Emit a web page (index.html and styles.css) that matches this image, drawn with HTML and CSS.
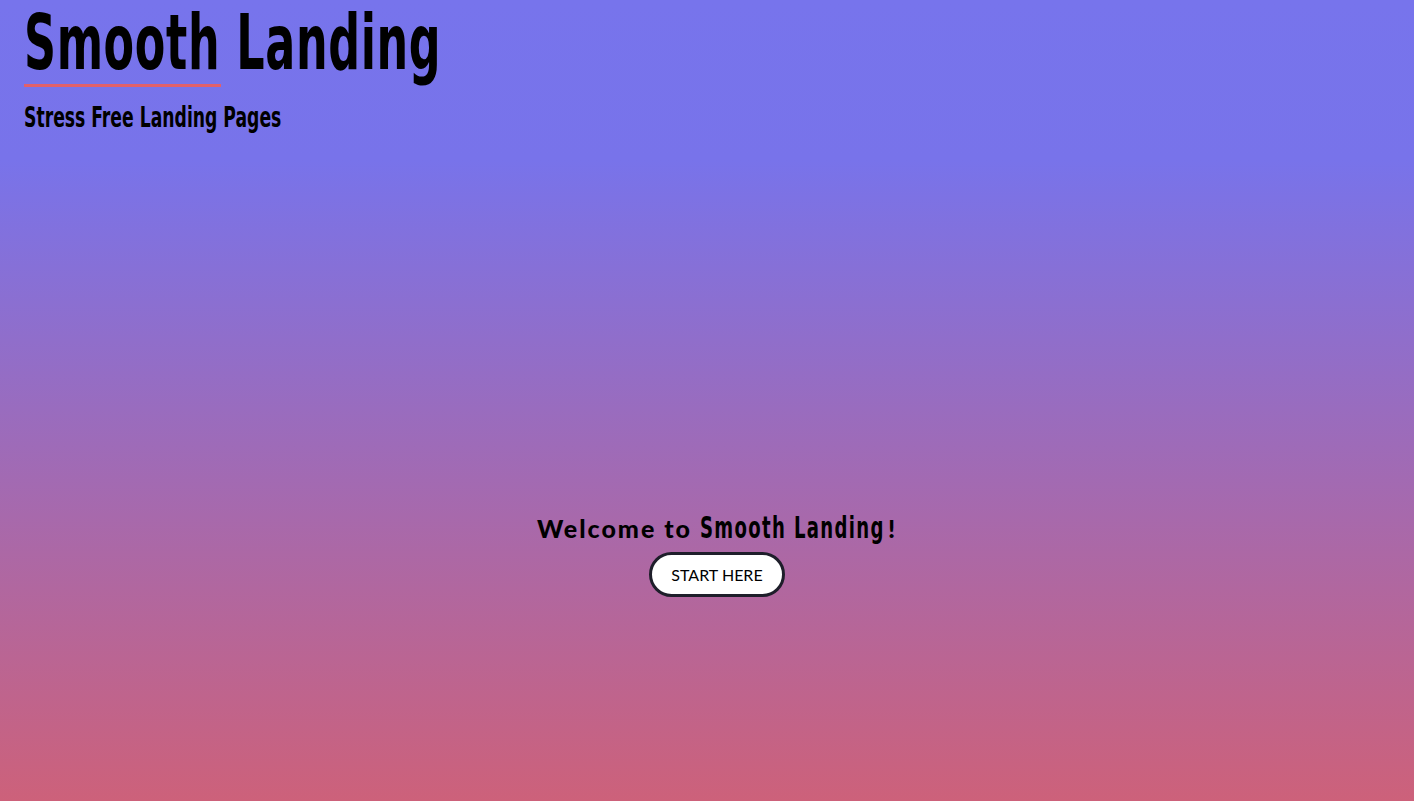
FILE: index.html
```html
<!DOCTYPE html>
<html>
<head>
<meta charset="utf-8">
<link rel="stylesheet" href="styles.css">
</head>
<body>
<div class="page">
  <header class="header">
    <h1 class="title">Smooth Landing</h1>
    <div class="rule"></div>
    <h2 class="subtitle">Stress Free Landing Pages</h2>
  </header>
  <main class="hero">
    <p class="welcome">Welcome to <span class="brand">Smooth Landing</span>!</p>
    <button class="start">START HERE</button>
  </main>
</div>
</body>
</html>
```

FILE: styles.css
```css
html, body {
  margin: 0;
  padding: 0;
  height: 100%;
}
body {
  background: linear-gradient(to bottom, #7774ec 0%, #7873ea 20%, #cd617a 100%);
  color: #000;
}
.page {
  height: 801px;
  display: flex;
  flex-direction: column;
  padding: 0 4px 0 24px;
  box-sizing: border-box;
}
.header {
  display: flex;
  flex-direction: column;
  align-items: flex-start;
}
.title {
  margin: 0;
  font-family: "DejaVu Sans", sans-serif;
  font-stretch: condensed;
  font-weight: bold;
  font-size: 76px;
  line-height: 86px;
  letter-spacing: 1px;
  transform: scaleX(0.65);
  transform-origin: left center;
  white-space: nowrap;
}
.rule {
  width: 197px;
  height: 3px;
  background: #e2606a;
  margin-top: -2px;
}
.subtitle {
  margin: 14px 0 0;
  font-family: "DejaVu Sans", sans-serif;
  font-stretch: condensed;
  font-weight: bold;
  font-size: 29px;
  line-height: 32px;
  transform: scaleX(0.66);
  transform-origin: left center;
  white-space: nowrap;
}
.hero {
  margin-top: 380px;
  display: flex;
  flex-direction: column;
  align-items: center;
}
.welcome {
  margin: 0;
  font-family: Lato, sans-serif;
  font-weight: 900;
  font-size: 25px;
  line-height: 30px;
  letter-spacing: 2px;
  white-space: nowrap;
}
.brand {
  display: inline-block;
  font-family: "DejaVu Sans", sans-serif;
  font-stretch: condensed;
  font-weight: bold;
  font-size: 30px;
  letter-spacing: 2px;
  transform: scaleX(0.67);
  transform-origin: left center;
  margin-right: -88px;
}
.start {
  margin-top: 9px;
  width: 136px;
  height: 45px;
  border: 3px solid #1e1e2a;
  border-radius: 24px;
  background: #fff;
  font-family: Lato, sans-serif;
  font-size: 16px;
  color: #000;
  padding: 0;
}
```
